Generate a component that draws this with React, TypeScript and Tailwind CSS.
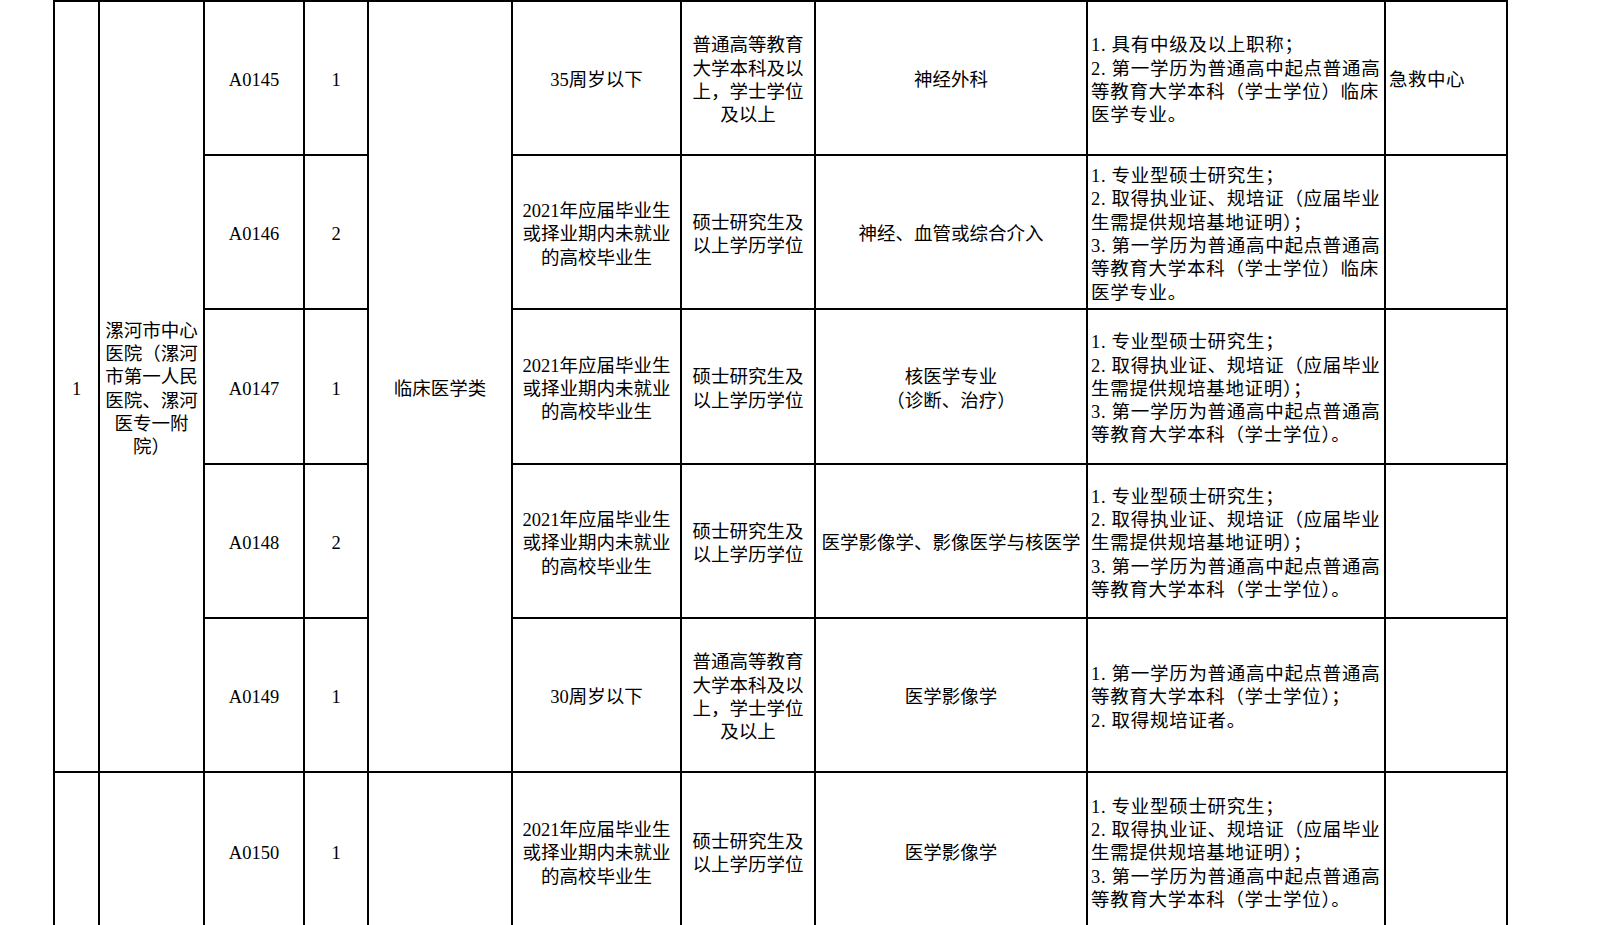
import React from "react";

type Post = {
  code: string;
  count: string;
  age: string[];
  edu: string[];
  major: string[];
  req: string[];
  dept?: string;
};

const FRESH = ["2021年应届毕业生", "或择业期内未就业", "的高校毕业生"];
const MASTER = ["硕士研究生及", "以上学历学位"];
const BACHELOR = ["普通高等教育", "大学本科及以", "上，学士学位", "及以上"];
const REQ_MASTER = [
  "1. 专业型硕士研究生；",
  "2. 取得执业证、规培证（应届毕业",
  "生需提供规培基地证明）；",
  "3. 第一学历为普通高中起点普通高",
  "等教育大学本科（学士学位）。",
];

const POSTS: Post[] = [
  {
    code: "A0145",
    count: "1",
    age: ["35周岁以下"],
    edu: BACHELOR,
    major: ["神经外科"],
    req: ["1. 具有中级及以上职称；", "2. 第一学历为普通高中起点普通高", "等教育大学本科（学士学位）临床", "医学专业。"],
    dept: "急救中心",
  },
  {
    code: "A0146",
    count: "2",
    age: FRESH,
    edu: MASTER,
    major: ["神经、血管或综合介入"],
    req: [
      "1. 专业型硕士研究生；",
      "2. 取得执业证、规培证（应届毕业",
      "生需提供规培基地证明）；",
      "3. 第一学历为普通高中起点普通高",
      "等教育大学本科（学士学位）临床",
      "医学专业。",
    ],
  },
  { code: "A0147", count: "1", age: FRESH, edu: MASTER, major: ["核医学专业", "（诊断、治疗）"], req: REQ_MASTER },
  { code: "A0148", count: "2", age: FRESH, edu: MASTER, major: ["医学影像学、影像医学与核医学"], req: REQ_MASTER },
  {
    code: "A0149",
    count: "1",
    age: ["30周岁以下"],
    edu: BACHELOR,
    major: ["医学影像学"],
    req: ["1. 第一学历为普通高中起点普通高", "等教育大学本科（学士学位）；", "2. 取得规培证者。"],
  },
];

const NEXT: Post = { code: "A0150", count: "1", age: FRESH, edu: MASTER, major: ["医学影像学"], req: REQ_MASTER };

function Cell({ children, className = "" }: { children?: React.ReactNode; className?: string }) {
  return (
    <div className={`flex items-center justify-center border-r-2 border-b-2 border-black pt-[6px] text-center ${className}`}>
      {children}
    </div>
  );
}

function Lines({ lines }: { lines: string[] }) {
  return (
    <div className="whitespace-nowrap">
      {lines.map((l, i) => (
        <div key={i}>{l}</div>
      ))}
    </div>
  );
}

function PostCells({ p }: { p: Post }) {
  return (
    <>
      <Cell>{p.code}</Cell>
      <Cell>{p.count}</Cell>
      {/* 临床医学类 occupies column 5 via row-span */}
      <Cell>
        <Lines lines={p.age} />
      </Cell>
      <Cell>
        <Lines lines={p.edu} />
      </Cell>
      <Cell>
        <Lines lines={p.major} />
      </Cell>
      <Cell className="justify-start pl-[3px] text-left tracking-[0.7px]">
        <Lines lines={p.req} />
      </Cell>
      <Cell className="justify-start pl-[3px] text-left tracking-[0.5px]">{p.dept}</Cell>
    </>
  );
}

export default function App() {
  return (
    <div className="h-[925px] w-[1600px] overflow-hidden bg-white">
      <div
        className="ml-[53px] grid w-[1455px] grid-cols-[45px_105px_100px_64px_144px_169px_134px_272px_298px_122px] grid-rows-[154px_154px_155px_154px_154px_158px] border-l-2 border-t-2 border-black font-['Liberation_Serif','Noto_Sans_CJK_SC',serif] text-[18.5px] leading-[23.3px] text-black"
      >
        {/* 第一组：漯河市中心医院 */}
        <Cell className="row-span-5">1</Cell>
        <Cell className="row-span-5">
          <Lines lines={["漯河市中心", "医院（漯河", "市第一人民", "医院、漯河", "医专一附", "院）"]} />
        </Cell>
        <Cell>{POSTS[0].code}</Cell>
        <Cell>{POSTS[0].count}</Cell>
        <Cell className="row-span-5">临床医学类</Cell>
        <Cell>
          <Lines lines={POSTS[0].age} />
        </Cell>
        <Cell>
          <Lines lines={POSTS[0].edu} />
        </Cell>
        <Cell>
          <Lines lines={POSTS[0].major} />
        </Cell>
        <Cell className="justify-start pl-[3px] text-left tracking-[0.7px]">
          <Lines lines={POSTS[0].req} />
        </Cell>
        <Cell className="justify-start pl-[3px] text-left tracking-[0.5px]">{POSTS[0].dept}</Cell>

        {POSTS.slice(1).map((p) => (
          <PostCells key={p.code} p={p} />
        ))}

        {/* 下一组 */}
        <Cell />
        <Cell />
        <Cell>{NEXT.code}</Cell>
        <Cell>{NEXT.count}</Cell>
        <Cell />
        <Cell>
          <Lines lines={NEXT.age} />
        </Cell>
        <Cell>
          <Lines lines={NEXT.edu} />
        </Cell>
        <Cell>
          <Lines lines={NEXT.major} />
        </Cell>
        <Cell className="justify-start pl-[3px] text-left tracking-[0.7px]">
          <Lines lines={NEXT.req} />
        </Cell>
        <Cell />
      </div>
    </div>
  );
}
